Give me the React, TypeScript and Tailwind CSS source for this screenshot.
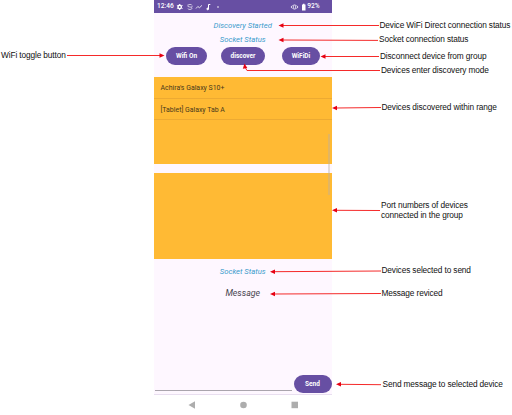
import type { ReactNode } from "react";

const labels = [
  { text: "WiFi toggle button", at: "left-[1px] top-[50px]" },
  { text: "Device WiFi Direct connection status", at: "left-[379.5px] top-[20px]" },
  { text: "Socket connection status", at: "left-[379px] top-[34px]" },
  { text: "Disconnect device from group", at: "left-[380px] top-[51px]" },
  { text: "Devices enter discovery mode", at: "left-[381px] top-[65px]" },
  { text: "Devices discovered within range", at: "left-[381.5px] top-[102px]" },
  { text: "Port numbers of devices\nconnected in the group", at: "left-[381px] top-[200px]" },
  { text: "Devices selected to send", at: "left-[381.5px] top-[265px]" },
  { text: "Message reviced", at: "left-[381.5px] top-[288px]" },
  { text: "Send message to selected device", at: "left-[382.5px] top-[379px]" },
];

const arrows = [
  { line: "M67 55.500H160", head: "M164.500 55.500l-5-2.200v4.400z" },
  { line: "M283 25.500H379", head: "M278.500 25.500l5-2.200v4.400z" },
  { line: "M283 40L378 40.400", head: "M278.500 40l5-2.200v4.400z" },
  { line: "M325 56.500H379", head: "M320.500 56.500l5-2.200v4.400z" },
  { line: "M380 70.500H247L245.500 68", head: "M244.500 63.500l-1.700 5.200 4.500-.6z" },
  { line: "M336 108L381 107.500", head: "M332 108l5-2.200v4.400z" },
  { line: "M336 210.300L380 210.500", head: "M332 210.300l5-2.200v4.400z" },
  { line: "M274 271.700L381 271", head: "M270 271.700l5-2.200v4.400z" },
  { line: "M274 294L381 293.500", head: "M270 294l5-2.200v4.400z" },
  { line: "M340 384.300L381 384.700", head: "M336 384.300l5-2.200v4.400z" },
];

function Pill({ children, width }: { children: ReactNode; width: string }) {
  return (
    <button className={`${width} block h-[18px] shrink-0 rounded-full bg-[#674fa3] text-center text-[6.5px] leading-[18px] font-bold text-white`}>
      {children}
    </button>
  );
}

function StatusBar() {
  return (
    <header className="flex h-[13px] items-center justify-between bg-[#674fa3] pr-[12px] pl-[3px] text-white">
      <div className="flex items-center">
        <span className="w-[19px] text-[6.6px] leading-[13px] font-medium">12:46</span>
        <svg className="h-[10px] w-[50px]" viewBox="0 0 50 10" fill="none" stroke="currentColor" strokeWidth="0.8">
          <circle cx="3.700" cy="5" r="1.700" strokeWidth="1.400" />
          <path d="M3.700 2v1M3.700 7v1M.9 3.500l1 .5M5.500 6l1 .5M.9 6.500l1-.5M5.500 4l1-.5" strokeWidth="1" />
          <path d="M12.500 2.500h3M12 4q0 1 2 1t2 1.200-2 1.300-2-1M12 2.500v2M16 3.500v1.500" opacity=".8" />
          <path d="M20 6.500l1.800-2 1.700 1.200L26 3.300" />
          <path d="M32.500 7V2.500h1.800" strokeWidth="1" />
          <circle cx="31.700" cy="6.900" r=".9" fill="currentColor" />
          <circle cx="42" cy="5" r=".8" fill="currentColor" stroke="none" />
        </svg>
      </div>
      <div className="flex items-center">
        <svg className="h-[10px] w-[17px]" viewBox="0 0 17 10" fill="none" stroke="currentColor" strokeWidth="0.8">
          <path d="M2.300 3.500L1 5 2.300 6.500M6.700 3.500L8 5 6.700 6.500" />
          <rect x="3.300" y="3" width="2.400" height="4" rx=".5" />
          <path d="M12 2.500h1v-.7h1.500v.7h1v6H12z" fill="currentColor" stroke="none" />
        </svg>
        <span className="text-[6.6px] leading-[13px] font-medium">92%</span>
      </div>
    </header>
  );
}

function Phone() {
  return (
    <section className="ml-[154px] flex h-[415px] w-[177.500px] flex-col font-['Roboto',sans-serif]">
      <StatusBar />
      <main className="flex h-[382px] flex-col border-b border-[#e9dff0] bg-[#fef7ff]">
        <div className="flex flex-col items-center pt-[5px] text-[7.700px] text-[#3b9ccc] italic">
          <p className="h-[14px] leading-[15px]">Discovery Started</p>
          <p className="h-[14px] leading-[15px]">Socket Status</p>
        </div>
        <div className="flex h-[31px] pl-[12px]">
          <div className="flex h-[18px] items-start gap-[14px] pt-[1px]">
            <Pill width="w-[41px]">Wifi On</Pill>
            <Pill width="w-[44px]">discover</Pill>
            <div className="ml-[3px]"><Pill width="w-[38px]">WiFiDi</Pill></div>
          </div>
        </div>
        <ul className="h-[86.500px] shrink-0 bg-[#ffba34] text-[6.950px] text-[#49391b]">
          <li className="h-[21.500px] border-b border-[#edaa32] pl-[6.500px] leading-[22px]">Achira's Galaxy S10+</li>
          <li className="h-[21.500px] border-b border-[#edaa32] pl-[6.500px] leading-[22px]">[Tablet] Galaxy Tab A</li>
        </ul>
        <div className="h-[9px] shrink-0" />
        <div className="h-[86.500px] shrink-0 bg-[#ffba34]" />
        <div className="flex flex-col items-center italic">
          <p className="mt-[5px] h-[15px] text-[7.700px] leading-[15px] text-[#3b9ccc]">Socket Status</p>
          <p className="mt-[5px] h-[18px] text-[8.800px] leading-[18px] text-[#49454f]">Message</p>
        </div>
        <div className="mt-auto mb-[1px] flex items-end justify-between pl-[1px]">
          <div className="mb-[2px] h-[16px] w-[137px] border-b border-[#aaa5ad]" />
          <Pill width="w-[38px]">Send</Pill>
        </div>
      </main>
      <nav className="flex h-[20px] items-center">
        <svg className="h-[20px] w-full" viewBox="0 0 177.500 20" fill="#adadad">
          <path d="M34.500 10l6.500-3.800v7.600z" />
          <circle cx="89.500" cy="10" r="3.300" />
          <rect x="137.500" y="6.700" width="6.500" height="6.500" />
        </svg>
      </nav>
    </section>
  );
}

export default function App() {
  return (
    <div className="relative h-[415px] w-[512px] overflow-hidden bg-white">
      <Phone />
      <div className="absolute top-[134px] left-[327.500px] h-[61px] w-[2px] bg-[#b9b0a8]/40" />
      <svg className="absolute inset-0" width="512" height="415" viewBox="0 0 512 415">
        {arrows.map(({ line, head }) => (
          <g key={line}>
            <path d={line} fill="none" stroke="#f52a2a" strokeWidth="1" />
            <path d={head} fill="#e60012" />
          </g>
        ))}
      </svg>
      {labels.map(({ text, at }) => (
        <p key={text} className={`${at} absolute font-['Liberation_Sans',Arial,sans-serif] text-[8.300px] leading-[10px] tracking-[-0.120px] whitespace-pre text-[#111]`}>
          {text}
        </p>
      ))}
    </div>
  );
}
